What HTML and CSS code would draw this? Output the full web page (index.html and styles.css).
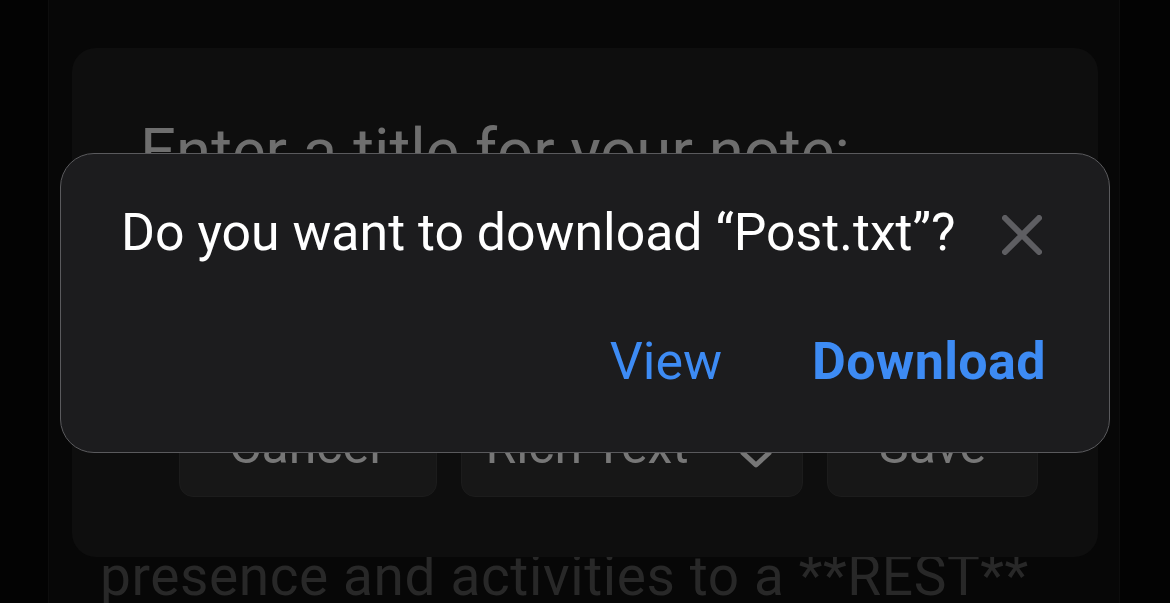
FILE: index.html
```html
<!DOCTYPE html>
<html lang="en">

<head>
  <meta charset="UTF-8">
  <meta name="viewport" content="width=device-width, initial-scale=1.0">
  <title>Download prompt</title>

  <link rel="stylesheet" href="styles.css">
</head>

<body>
  <div class="page">
    <p class="page-text">presence and activities to a **REST**</p>

    <!-- note modal (behind the download prompt) -->
    <div class="note-modal">
      <h2 class="note-title">Enter a title for your note:</h2>
      <div class="note-input"></div>
      <div class="note-actions">
        <button class="note-btn cancel">Cancel</button>
        <button class="note-btn format">
          Rich Text
          <svg class="chevrons" width="34" height="46" viewBox="0 0 34 46">
            <path d="M4 16 L17 4 L30 16 M4 30 L17 42 L30 30" fill="none" stroke="#777" stroke-width="5" stroke-linecap="round" stroke-linejoin="round" />
          </svg>
        </button>
        <button class="note-btn save">Save</button>
      </div>
    </div>
  </div>

  <!-- download prompt -->
  <div class="prompt">
    <div class="prompt-head">
      <span class="prompt-title">Do you want to download “Post.txt”?</span>
      <svg class="close" width="40" height="40" viewBox="0 0 40 40">
        <path d="M3 3 L37 37 M37 3 L3 37" stroke="#5e5e62" stroke-width="6" stroke-linecap="round" />
      </svg>
    </div>
    <div class="prompt-actions">
      <span class="link">View</span>
      <span class="link strong">Download</span>
    </div>
  </div>
</body>

</html>
```

FILE: styles.css
```css
html,
body {
  margin: 0;
  height: 100%;
}

body {
  background-color: #030303;
  font-family: Roboto, "Liberation Sans", sans-serif;
  overflow: hidden;
  position: relative;
}

/* page column */
.page {
  position: relative;
  margin-left: 48px;
  width: 1072px;
  height: 100%;
  box-sizing: border-box;
  background-color: #070707;
  border-left: 1px solid #0d0d0d;
  border-right: 1px solid #0d0d0d;
  padding: 543px 0 0 51px;
}

.page-text {
  margin: 0;
  font-size: 55px;
  letter-spacing: 0.6px;
  line-height: 1.2;
  color: #282828;
  white-space: nowrap;
}

/* note modal */
.note-modal {
  position: absolute;
  left: 23px;
  top: 48px;
  width: 1026px;
  height: 509px;
  box-sizing: border-box;
  background-color: #0e0e0e;
  border-radius: 24px;
  padding: 66px 60px 60px 68px;
  display: flex;
  flex-direction: column;
}

.note-title {
  margin: 0;
  font-size: 63.5px;
  font-weight: 400;
  color: #6e6e6e;
  white-space: nowrap;
}

.note-input {
  flex: 1;
}

.note-actions {
  display: flex;
  justify-content: flex-end;
  gap: 24px;
}

.note-btn {
  height: 102px;
  border: 1px solid #1c1c1c;
  border-radius: 14px;
  background-color: #171717;
  color: #777;
  font-family: inherit;
  font-size: 50px;
  display: flex;
  align-items: center;
  justify-content: center;
  padding: 0;
}

.cancel {
  width: 258px;
  padding-right: 6px;
}

.format {
  width: 342px;
  gap: 50px;
  padding-right: 6px;
}

.save {
  width: 211px;
}

/* download prompt */
.prompt {
  position: absolute;
  left: 60px;
  top: 153px;
  width: 1050px;
  height: 300px;
  box-sizing: border-box;
  background-color: #1c1c1e;
  border: 1px solid #5a5a5d;
  border-radius: 34px;
  padding: 48px 67px 0 60px;
}

.prompt-head {
  display: flex;
  justify-content: space-between;
  align-items: center;
}

.prompt-title {
  font-size: 51.8px;
  color: #fff;
  white-space: nowrap;
}

.close {
  margin-top: 4px;
}

.prompt-actions {
  display: flex;
  justify-content: flex-end;
  gap: 90px;
  margin-top: 68px;
  margin-right: -4px;
}

.link {
  font-size: 52px;
  color: #3d8bf4;
}

.link.strong {
  font-weight: 700;
  letter-spacing: 0.4px;
}
```
